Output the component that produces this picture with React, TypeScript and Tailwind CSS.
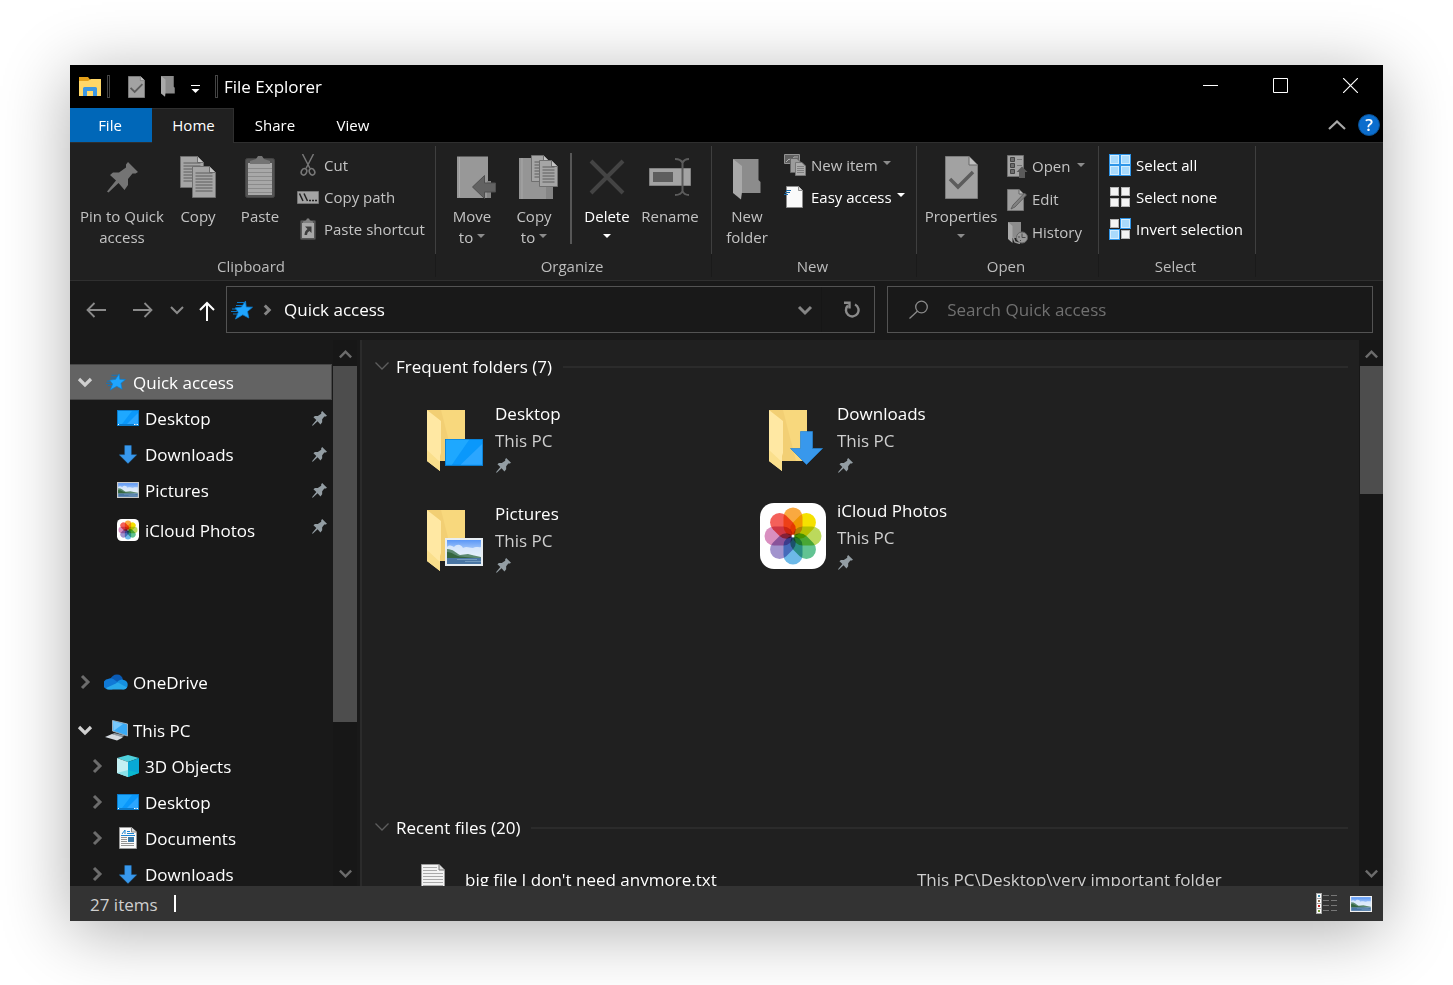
import React, { useId } from "react";

type IconProps = { className?: string };

/* ---------- shared glyphs ---------- */

function Pin({ className = "" }: IconProps) {
  return (
    <svg viewBox="0 0 31 31" className={className} fill="currentColor" aria-hidden="true">
      <path d="M21 0 31 10 28.5 11.5 25.5 11.5 21 17 21 23 17.5 28 11.5 21 1.5 30.5 0 29.5 9 18.5 3 13 6 10.5 12 10.5 19 5.5 19 2.5Z" />
    </svg>
  );
}

function Chevron({ dir, className = "", weight = 3 }: IconProps & { dir: "up" | "down" | "right"; weight?: number }) {
  const d = { up: "M2 10 8 4 14 10", down: "M2 5 8 11 14 5", right: "M5 2 11 8 5 14" }[dir];
  return (
    <svg viewBox="0 0 16 16" className={className} fill="none" stroke="currentColor" strokeWidth={weight} aria-hidden="true">
      <path d={d} />
    </svg>
  );
}

function Caret({ className = "" }: IconProps) {
  return (
    <svg viewBox="0 0 8 4" className={`h-1 w-2 ${className}`} fill="currentColor" aria-hidden="true">
      <path d="M0 0H8L4 4Z" />
    </svg>
  );
}

function Star({ className = "" }: IconProps) {
  return (
    <svg viewBox="0 0 22 20" className={className} aria-hidden="true">
      <path d="M6 2.500h7M5 5.500h7M0 11.500h6M1 9h4M2 14h5" stroke="#0b76c4" strokeWidth="1" />
      <path d="M14.500 1 15.200 7 21.500 7.200 16.500 11.500 17.800 18 11.800 14.800 4.500 19 7.300 12.200 4 8 10.500 7Z" fill="#1fa5ff" stroke="#0c7fd0" strokeWidth=".8" />
    </svg>
  );
}

function DesktopIcon({ className = "", plain }: IconProps & { plain?: boolean }) {
  return (
    <svg viewBox="0 0 22 16" preserveAspectRatio="none" className={className} aria-hidden="true">
      <path d="M0 0H22V16H0Z" fill="#0a7bcc" />
      <path d={plain ? "M.5 .5H21.500V15.300H.5Z" : "M1 1H21V14H1Z"} fill="#0a98fb" />
      <path d={plain ? "M.5 .5H14L4 15.300H.5Z" : "M1 1H15L5 14H1Z"} fill="#1ea8ff" />
      <path d={plain ? "M21.500 3V15.300H9Z" : "M21 3V14H10Z"} fill="#2ba6ff" />
      {!plain && <path d="M1 14.500h1M17 14.500h1.500M19.500 14.500h1.500" stroke="#fff" strokeWidth="1" />}
    </svg>
  );
}

function DownArrow({ className = "" }: IconProps) {
  return (
    <svg viewBox="0 0 33 34" className={className} aria-hidden="true">
      <path d="M10.500 .5H22.500V17.500H32.500L16.500 33.500.5 17.500H10.500Z" fill="#3898ec" stroke="#2484d6" strokeWidth=".7" />
    </svg>
  );
}

function Landscape({ className = "", frame = "#e8eef2" }: IconProps & { frame?: string }) {
  const id = useId();
  return (
    <svg viewBox="0 0 38 28" preserveAspectRatio="none" className={className} aria-hidden="true">
      <defs>
        <linearGradient id={id} x1="0" y1="0" x2="0" y2="1">
          <stop offset="0" stopColor="#5a97f7" />
          <stop offset=".55" stopColor="#c5dcfa" />
          <stop offset=".7" stopColor="#eaf3fb" />
        </linearGradient>
      </defs>
      <path d="M0 0H38V28H0Z" fill={frame} />
      <path d="M2 2H36V26H2Z" fill={`url(#${id})`} />
      <path d="M2 9C5 6 7 8 9 9 12 5 17 7 18 10 22 8 24 10 28 10 31 8 34 10 36 9V18H2Z" fill="#e6f0fb" opacity=".8" />
      <path d="M2 11C8 11 11 15 15 17L23 16 29 17.500 36 19V20H2Z" fill="#5d8a72" />
      <path d="M2 14C7 14 9 17 15 18.500L30 20H2Z" fill="#35663f" />
      <path d="M2 20H36V26H2Z" fill="#4a76a4" />
      <path d="M12 21.500H32M20 23.500H36" stroke="#7fa5c5" strokeWidth=".8" />
    </svg>
  );
}

const petals = ["#f9a940", "#f5e100", "#bcd95c", "#62c392", "#6db9e8", "#a193cd", "#d98fc0", "#f4605a"];

function PhotosIcon({ className = "" }: IconProps) {
  return (
    <svg viewBox="-33 -33 66 66" className={className} aria-hidden="true">
      <rect x="-33" y="-33" width="66" height="66" rx="14" fill="#fff" />
      <g className="isolate">
        {petals.map((color, i) => (
          <rect
            key={color}
            x="-9.500"
            y="-28.500"
            width="19"
            height="28.500"
            rx="9.500"
            fill={color}
            transform={`rotate(${i * 45})`}
            className="mix-blend-multiply"
          />
        ))}
      </g>
      <circle r="1.500" fill="#fff" />
    </svg>
  );
}

function Folder({ className = "" }: IconProps) {
  return (
    <svg viewBox="0 0 38 61" className={className} aria-hidden="true">
      <path d="M0 0H38V51H10Z" fill="#f2cf74" />
      <path d="M38 0V51H27L14 0Z" fill="#fbdd83" opacity=".6" />
      <path d="M0 0 14 11V43L13 46V61L0 51Z" fill="#ffe8a3" />
      <path d="M0 40 13 52V61L0 51Z" fill="#fadf8c" />
    </svg>
  );
}

/* ---------- ribbon icons ---------- */

function GrayPage({ x, y, w, h }: { x: number; y: number; w: number; h: number }) {
  const rows = Array.from({ length: Math.floor((h - 8) / 3) }, (_, i) => y + 6.5 + i * 3);
  return (
    <g>
      <path d={`M${x} ${y}H${x + w - 6}L${x + w} ${y + 6}V${y + h}H${x}Z`} fill="#a5a5a5" stroke="#6f6f6f" />
      <path d={`M${x + w - 6} ${y}V${y + 6}H${x + w}`} fill="#c4c4c4" stroke="#6f6f6f" />
      {rows.map((r) => (
        <path key={r} d={`M${x + 3} ${r}H${x + w - 3}`} stroke="#5c5c5c" />
      ))}
    </g>
  );
}

function CopyIcon() {
  return (
    <svg viewBox="0 0 38 44" className="h-11 w-[38px]" aria-hidden="true">
      <GrayPage x={1.5} y={1.5} w={23} h={31} />
      <GrayPage x={13.5} y={11.5} w={23} h={31} />
    </svg>
  );
}

function PasteIcon() {
  return (
    <svg viewBox="0 0 30 44" className="h-11 w-[30px]" aria-hidden="true">
      <rect x=".5" y="3.500" width="29" height="39" rx="2" fill="#535353" stroke="#444" />
      <path d="M3 8H27V40H3Z" fill="#a8a8a8" />
      <path d="M3 13.500H27M3 17.500H27M3 21.500H27M3 25.500H27M3 29.500H27M3 33.500H27M3 37.500H27" stroke="#8b8b8b" />
      <path d="M5 9V6L11 4 13 1H17L19 4 25 6V9Z" fill="#747474" />
    </svg>
  );
}

function CutIcon() {
  return (
    <svg viewBox="0 0 16 22" className="h-[22px] w-4" fill="none" stroke="#777" aria-hidden="true">
      <path d="M2.500 0 10 14.500M13.500 0 6 14.500" strokeWidth="1.500" />
      <ellipse cx="4" cy="17.800" rx="2.600" ry="3.300" transform="rotate(25 4 17.800)" strokeWidth="1.600" />
      <ellipse cx="12" cy="17.800" rx="2.600" ry="3.300" transform="rotate(-25 12 17.800)" strokeWidth="1.600" />
    </svg>
  );
}

function CopyPathIcon() {
  return (
    <svg viewBox="0 0 22 13" className="h-[13px] w-[22px]" aria-hidden="true">
      <path d="M.5 .5H21.500V12.500H.5Z" fill="#a3a3a3" stroke="#777" />
      <path d="M2.500 2.500 6 10M7 2.500 10.500 10" stroke="#222" strokeWidth="1.500" />
      <path d="M12 9.500h2M15 9.500h2M18 9.500h2" stroke="#222" strokeWidth="1.300" />
    </svg>
  );
}

function PasteShortcutIcon() {
  return (
    <svg viewBox="0 0 16 22" className="h-[22px] w-4" aria-hidden="true">
      <rect x=".5" y="2.500" width="15" height="19" rx="1" fill="#575757" stroke="#444" />
      <path d="M2 5H14V20H2Z" fill="#a8a8a8" />
      <path d="M3 5V3.500L6 2.500 7 .5H9L10 2.500 13 3.500V5Z" fill="#808080" />
      <path d="M5 8.500H11.500V15L9.500 13Q7 14 7 17H4.500Q4.500 13 7.500 11Z" fill="#3d3d3d" />
    </svg>
  );
}

function MoveToIcon() {
  return (
    <svg viewBox="0 0 40 44" className="ml-[7px] h-11 w-10" aria-hidden="true">
      <path d="M1 1.500H32V43H1Z" fill="#989898" />
      <path d="M3.500 2V42" stroke="#aaa" />
      <path d="M31 26H35V43H31Z" fill="#858585" />
      <path d="M16.500 32 28.500 20.500V28H39.500V37H28.500V43.500Z" fill="#626262" stroke="#4f4f4f" />
    </svg>
  );
}

function CopyToIcon() {
  return (
    <svg viewBox="0 0 40 46" className="ml-[9px] h-[46px] w-10" aria-hidden="true">
      <path d="M0 4H28V45H0Z" fill="#959595" />
      <path d="M3 4V45" stroke="#a8a8a8" />
      <path d="M27 30H34V45H27Z" fill="#858585" />
      <GrayPage x={12.5} y={1.5} w={18} h={26} />
      <GrayPage x={20.5} y={6.5} w={18} h={26} />
    </svg>
  );
}

function DeleteIcon() {
  return (
    <svg viewBox="0 0 36 36" className="h-9 w-9" stroke="#444" strokeWidth="4" aria-hidden="true">
      <path d="M2 2 34 34M34 2 2 34" />
    </svg>
  );
}

function RenameIcon() {
  return (
    <svg viewBox="0 0 42 38" className="h-[38px] w-[42px]" fill="none" aria-hidden="true">
      <path d="M.5 10.500H41.500V27.500H.5Z" fill="#a3a3a3" stroke="#818181" />
      <path d="M4 14H24V24H4Z" fill="#5e5e5e" />
      <path d="M33.500 4V34M26 1Q32 1 33.500 5 35 1 40 1M26 37Q32 37 33.500 33 35 37 40 37" stroke="#5c5c5c" strokeWidth="2" />
    </svg>
  );
}

function GrayFolder({ className = "" }: IconProps) {
  return (
    <svg viewBox="0 0 28 41" className={className} preserveAspectRatio="none" aria-hidden="true">
      <path d="M0 0H25.500V21L27.500 23V34H8Z" fill="#8c8c8c" />
      <path d="M0 0 9 7V33L8 40.500 0 34Z" fill="#a9a9a9" />
    </svg>
  );
}

function CheckPage({ className = "" }: IconProps) {
  return (
    <svg viewBox="0 0 33 43" className={className} preserveAspectRatio="none" aria-hidden="true">
      <path d="M.5 .5H24L32.500 9V42.500H.5Z" fill="#a2a2a2" stroke="#7c7c7c" />
      <path d="M24 .5V9H32.500" fill="#c0c0c0" stroke="#6b6b6b" />
      <path d="M5 23 13 31 28 16" fill="none" stroke="#5c5c5c" strokeWidth="3.500" />
    </svg>
  );
}

function NewItemIcon() {
  return (
    <svg viewBox="0 0 22 22" className="h-[22px] w-[22px]" aria-hidden="true">
      <path d="M.5 .5H15.500V9.500H.5Z" fill="#5f5f5f" stroke="#929292" />
      <path d="M2 8 5 5 8 7 10 3 14 3" stroke="#b0b0b0" fill="none" />
      <path d="M6.500 4.500H13L16.500 8V18.500H6.500Z" fill="#9c9c9c" stroke="#666" />
      <path d="M11.500 8.500H18L21.500 12V21.500H11.500Z" fill="#acacac" stroke="#777" />
      <path d="M13 12.500H20M13 14.500H20M13 16.500H20M13 18.500H20" stroke="#808080" />
    </svg>
  );
}

function EasyAccessIcon() {
  return (
    <svg viewBox="0 0 22 22" className="h-[22px] w-[22px]" aria-hidden="true">
      <path d="M2.500 .5H14.500L18.500 4.500V21.500H2.500Z" fill="#fafafa" stroke="#8d8d8d" />
      <path d="M14.500 .5V4.500H18.500" fill="#ddd" stroke="#8d8d8d" />
      <path d="M2 4.500H7M1 6.500H6M0 8.500H4" stroke="#1c6ba8" />
    </svg>
  );
}

function OpenIcon() {
  return (
    <svg viewBox="0 0 22 24" className="h-6 w-[22px]" aria-hidden="true">
      <path d="M.5 .5H16.500V21.500H.5Z" fill="#a4a4a4" stroke="#707070" />
      <path d="M3.500 2.500h4v4h-4zM3.500 8.500h4v4h-4zM3.500 14.500h4v4h-4z" fill="#6c6c6c" stroke="#444" />
      <path d="M10 4.500h5M10 10.500h5" stroke="#777" />
      <path d="M15 11.500 20.500 17H18V23H12V17H9.500Z" fill="#5a5a5a" />
    </svg>
  );
}

function EditIcon() {
  return (
    <svg viewBox="0 0 22 22" className="h-[22px] w-[22px]" aria-hidden="true">
      <path d="M.5 .5H12L16.500 5V21.500H.5Z" fill="#9f9f9f" stroke="#757575" />
      <path d="M12 .5V5H16.500" fill="#bbb" stroke="#666" />
      <path d="M4 20 6 16 17.500 4 19.500 6 8 18Z" fill="#808080" stroke="#555" strokeWidth=".8" />
    </svg>
  );
}

function HistoryIcon() {
  return (
    <svg viewBox="0 0 22 22" className="h-[22px] w-[22px]" aria-hidden="true">
      <path d="M1 0H14V16H5Z" fill="#8c8c8c" />
      <path d="M1 0 5.500 4V21L1 17Z" fill="#aaa" />
      <circle cx="15" cy="15.500" r="5.500" fill="#9a9a9a" stroke="#666" />
      <path d="M15 11.500V15.500H18.500M11 15h2M13 19l1-1" stroke="#4a4a4a" fill="none" />
      <path d="M6 15 8 20 13 21.500" stroke="#999" strokeWidth="1.500" fill="none" />
    </svg>
  );
}

function SelectIcon({ on }: { on: boolean[] }) {
  const at = [
    [0, 0],
    [11, 0],
    [0, 11],
    [11, 11],
  ];
  return (
    <svg viewBox="0 0 22 22" className="h-[22px] w-[22px]" aria-hidden="true">
      {at.map(([x, y], i) =>
        on[i] ? (
          <g key={i}>
            <rect x={x} y={y} width="11" height="11" fill="#2f95e8" />
            <rect x={x + 1.5} y={y + 1.5} width="8" height="8" fill="#a9dafc" stroke="#d5eefe" />
          </g>
        ) : (
          <rect key={i} x={x + 1.5} y={y + 1.5} width="8" height="8" fill="#f4f4f4" stroke="#b5b5b5" />
        )
      )}
    </svg>
  );
}

/* ---------- window chrome ---------- */

function TitleBar() {
  return (
    <header className="flex h-[43px] shrink-0 items-center bg-black pl-[9px]">
      <svg viewBox="0 0 22 20" className="h-5 w-[22px]" aria-hidden="true">
        <path d="M0 0H9L11 2.500H22V19H0Z" fill="#e5a11a" />
        <path d="M0 4H9L12 2H22V19H0Z" fill="#ffd768" />
        <path d="M4 19V11.500Q4 10 5.500 10H16.500Q18 10 18 11.500V19H14V14H8V19Z" fill="#3b96e2" />
      </svg>
      <span className="ml-1.5 h-[23px] w-[3px] border border-[#444]" />
      <button type="button" aria-label="Properties" className="ml-[18px]">
        <CheckPage className="h-[22px] w-[17px]" />
      </button>
      <button type="button" aria-label="New folder" className="ml-4">
        <GrayFolder className="h-[21px] w-[14px]" />
      </button>
      <button type="button" aria-label="Customize Quick Access Toolbar" className="ml-4 pt-1">
        <svg viewBox="0 0 9 8" className="h-2 w-[9px]" fill="#fff" aria-hidden="true">
          <path d="M0 0H9V1H0ZM.5 4H8.500L4.500 8Z" />
        </svg>
      </button>
      <span className="ml-[15px] h-[23px] w-[3px] border border-[#444]" />
      <h1 className="ml-[6px] text-[17px] leading-6 text-white">File Explorer</h1>
      <div className="ml-auto flex h-full gap-[5px] pb-0.5 text-white">
        <button type="button" aria-label="Minimize" className="flex w-[65px] items-center justify-center">
          <svg viewBox="0 0 15 15" className="h-[15px] w-[15px]" fill="none" stroke="currentColor"><path d="M0 7.500H15" /></svg>
        </button>
        <button type="button" aria-label="Maximize" className="flex w-[65px] items-center justify-center">
          <svg viewBox="0 0 15 15" className="h-[15px] w-[15px]" fill="none" stroke="currentColor"><path d="M.5 .5H14.500V14.500H.5Z" /></svg>
        </button>
        <button type="button" aria-label="Close" className="flex w-[65px] items-center justify-center">
          <svg viewBox="0 0 15 15" className="h-[15px] w-[15px]" fill="none" stroke="currentColor" strokeWidth="1.200"><path d="M0 0 15 15M15 0 0 15" /></svg>
        </button>
      </div>
    </header>
  );
}

function TabStrip() {
  return (
    <div className="flex h-[34px] shrink-0 items-stretch bg-black text-[15px] text-white">
      <button type="button" className="w-[82px] bg-[#0067b8] pr-0.5">File</button>
      <button type="button" className="relative z-10 -mb-px w-[82px] border-t border-r border-[#2f2f2f] bg-[#202020] pb-0.5 pl-0.5">Home</button>
      <button type="button" className="w-[82px]">Share</button>
      <button type="button" className="w-[74px]">View</button>
      <div className="ml-auto flex items-center gap-3 pr-[3px]">
        <button type="button" aria-label="Collapse the ribbon" className="text-[#a8a8a8]">
          <svg viewBox="0 0 18 10" className="h-2.5 w-[18px]" fill="none" stroke="currentColor" strokeWidth="2.200"><path d="M1 9 9 1.500 17 9" /></svg>
        </button>
        <button type="button" aria-label="Help" className="flex h-[22px] w-[22px] items-center justify-center rounded-full border border-[#0a4f92] bg-[#0b6dcd] text-[17px] leading-5 font-semibold">?</button>
      </div>
    </div>
  );
}

function Group({ title, className, children }: { title: string; className: string; children: React.ReactNode }) {
  return (
    <section aria-label={title} className={`flex shrink-0 flex-col pt-[3px] ${className}`}>
      <div className="flex h-[108px] border-r border-[#3f3f3f]">{children}</div>
      <h2 className="h-[23px] border-r border-[#1a1a1a] pr-[3px] text-center text-[15px] leading-6 text-[#bcbcbc]">{title}</h2>
    </section>
  );
}

function BigButton({ icon, label, second, caret, active, className }: { icon: React.ReactNode; label: string; second?: string; caret?: boolean; active?: boolean; className: string }) {
  return (
    <button type="button" className={`flex shrink-0 flex-col items-center pt-[7px] text-[15px] leading-[21px] whitespace-nowrap ${active ? "text-white" : "text-[#c3c3c3]"} ${className}`}>
      <span className="mb-[5px] flex h-12 items-center justify-center">{icon}</span>
      <span>{label}</span>
      {(second || caret) && (
        <span className={`flex gap-1 ${second ? "h-[21px] items-center" : "h-[17px] items-center"}`}>
          {second}
          {caret && <Caret className={`${second ? "-mt-1" : ""} ${active ? "text-white" : "text-[#8c8c8c]"}`} />}
        </span>
      )}
    </button>
  );
}

function SmallButton({ icon, label, caret, active, tall }: { icon: React.ReactNode; label: string; caret?: boolean; active?: boolean; tall?: boolean }) {
  return (
    <button type="button" className={`flex items-center text-[15px] whitespace-nowrap ${tall ? "h-[33px] gap-[3px]" : "h-8 gap-[5px]"} ${active ? "text-white" : "text-[#c3c3c3]"}`}>
      <span className="flex w-[22px] items-center justify-center">{icon}</span>
      <span>{label}</span>
      {caret && <Caret className={`-mt-1 ${tall ? "ml-1" : ""} ${active ? "text-white" : "text-[#8c8c8c]"}`} />}
    </button>
  );
}

function Ribbon() {
  return (
    <div className="flex h-[139px] shrink-0 overflow-hidden border-y border-[#2f2f2f] bg-[#202020]">
      <Group title="Clipboard" className="w-[366px]">
        <BigButton className="ml-2 w-[88px]" icon={<Pin className="h-[31px] w-[31px] text-[#747474]" />} label="Pin to Quick" second="access" />
        <BigButton className="w-16" icon={<CopyIcon />} label="Copy" />
        <BigButton className="w-[60px]" icon={<PasteIcon />} label="Paste" />
        <div className="ml-[7px] flex flex-col pt-[3px]">
          <SmallButton icon={<CutIcon />} label="Cut" />
          <SmallButton icon={<CopyPathIcon />} label="Copy path" />
          <SmallButton icon={<PasteShortcutIcon />} label="Paste shortcut" />
        </div>
      </Group>
      <Group title="Organize" className="w-[276px]">
        <BigButton className="ml-[5px] w-[62px]" icon={<MoveToIcon />} label="Move" second="to" caret />
        <BigButton className="w-[62px]" icon={<CopyToIcon />} label="Copy" second="to" caret />
        <span className="mt-[7px] mr-[5px] ml-[5px] h-[91px] w-0.5 bg-[#575757]" />
        <BigButton className="w-[60px]" icon={<DeleteIcon />} label="Delete" caret active />
        <BigButton className="w-[66px]" icon={<RenameIcon />} label="Rename" />
      </Group>
      <Group title="New" className="w-[205px]">
        <BigButton className="ml-1 w-[62px]" icon={<GrayFolder className="mt-1 h-[41px] w-7" />} label="New" second="folder" />
        <div className="ml-[6px] flex flex-col pt-[3px]">
          <SmallButton icon={<NewItemIcon />} label="New item" caret />
          <SmallButton icon={<EasyAccessIcon />} label="Easy access" caret active />
        </div>
      </Group>
      <Group title="Open" className="w-[182px]">
        <BigButton className="ml-[5px] w-[78px]" icon={<CheckPage className="h-[43px] w-[33px]" />} label="Properties" caret />
        <div className="ml-[7px] flex flex-col pt-1">
          <SmallButton icon={<OpenIcon />} label="Open" caret tall />
          <SmallButton icon={<EditIcon />} label="Edit" tall />
          <SmallButton icon={<HistoryIcon />} label="History" tall />
        </div>
      </Group>
      <Group title="Select" className="w-[157px]">
        <div className="ml-2.5 flex flex-col pt-[3px]">
          <SmallButton icon={<SelectIcon on={[true, true, true, true]} />} label="Select all" active />
          <SmallButton icon={<SelectIcon on={[false, false, false, false]} />} label="Select none" active />
          <SmallButton icon={<SelectIcon on={[false, true, true, false]} />} label="Invert selection" active />
        </div>
      </Group>
    </div>
  );
}

function AddressRow() {
  return (
    <div className="flex h-[59px] shrink-0 items-center bg-[#191919] pb-0.5 text-[17px] text-white">
      <div className="flex w-[156px] shrink-0 items-center pl-4 text-[#8b8b8b]">
        <button type="button" aria-label="Back">
          <svg viewBox="0 0 20 16" className="h-4 w-5" fill="none" stroke="currentColor" strokeWidth="1.800"><path d="M20 8H1.500M8.500 1 1.500 8 8.500 15" /></svg>
        </button>
        <button type="button" aria-label="Forward" className="ml-[27px]">
          <svg viewBox="0 0 20 16" className="h-4 w-5" fill="none" stroke="currentColor" strokeWidth="1.800"><path d="M0 8H18.500M11.500 1 18.500 8 11.500 15" /></svg>
        </button>
        <button type="button" aria-label="Recent locations" className="ml-4">
          <Chevron dir="down" weight={2} className="h-4 w-4" />
        </button>
        <button type="button" aria-label="Up" className="ml-[14px] text-white">
          <svg viewBox="0 0 16 20" className="mt-0.5 h-5 w-4" fill="none" stroke="currentColor" strokeWidth="2"><path d="M8 20V2M1 9 8 2 15 9" /></svg>
        </button>
      </div>
      <div className="flex h-[47px] min-w-0 flex-1 items-center border border-[#535353] pl-1">
        <Star className="h-5 w-[22px]" />
        <Chevron dir="right" weight={4} className="ml-2 h-3 w-3 text-[#858585]" />
        <span className="ml-[11px]">Quick access</span>
        <button type="button" aria-label="Previous locations" className="mr-2 ml-auto text-[#858585]">
          <Chevron dir="down" weight={3} className="h-4 w-4" />
        </button>
        <button type="button" aria-label="Refresh" className="flex h-full w-[53px] items-center justify-center border-l border-[#161616] pl-[7px] text-[#8b8b8b]">
          <svg viewBox="0 0 16 18" className="h-[18px] w-4" fill="none" stroke="currentColor" strokeWidth="2.400">
            <path d="M11 3.500A6.300 6.300 0 1 1 4 4.500" />
            <path d="M0 1.800H5.500V7.500" />
          </svg>
        </button>
      </div>
      <label className="mr-2.5 ml-3 flex h-[47px] w-[37%] items-center border border-[#535353] pl-[21px]">
        <svg viewBox="0 0 20 20" className="h-5 w-5 shrink-0" fill="none" stroke="#8b8b8b" strokeWidth="1.300" aria-hidden="true">
          <circle cx="12.500" cy="7" r="5.800" />
          <path d="M8.300 11.300 .5 18.500" />
        </svg>
        <input type="text" aria-label="Search Quick access" placeholder="Search Quick access" className="ml-[18px] h-full min-w-0 flex-1 bg-transparent text-[17px] outline-none placeholder:text-[#707070]" />
      </label>
    </div>
  );
}

/* ---------- panes ---------- */

function ScrollTrack({ thumb }: { thumb: string }) {
  return (
    <div className="flex w-6 shrink-0 flex-col bg-[#171717] text-[#6c6c6c]">
      <button type="button" aria-label="Scroll up" className="flex h-[26px] items-center justify-center pt-1">
        <Chevron dir="up" weight={2.6} className="h-[15px] w-[15px]" />
      </button>
      <div className="flex-1"><div className={`bg-[#4d4d4d] ${thumb}`} /></div>
      <button type="button" aria-label="Scroll down" className="flex h-[26px] items-center justify-center">
        <Chevron dir="down" weight={2.6} className="h-[15px] w-[15px]" />
      </button>
    </div>
  );
}

function TreeRow({ icon, label, open, child, pinned, selected, closed, low }: { icon: React.ReactNode; label: string; open?: boolean; closed?: boolean; child?: boolean; pinned?: boolean; selected?: boolean; low?: boolean }) {
  return (
    <li>
      <button type="button" className={`flex h-9 w-full items-center text-left ${child ? "pl-5" : "pl-2"} ${selected ? "border-y border-r border-[#474747] bg-[#636363]" : ""}`}>
        <span className="flex w-[14px] justify-center">
          {open && <Chevron dir="down" weight={3.2} className="h-4 w-4 shrink-0 text-[#d0d0d0]" />}
          {closed && <Chevron dir="right" weight={3} className="h-4 w-4 shrink-0 text-[#6c6c6c]" />}
        </span>
        <span className={`ml-3 flex flex-1 items-center ${low ? "pt-2" : ""}`}>
          <span className="flex w-6 items-center justify-center">{icon}</span>
          <span className="ml-[5px] pt-0.5 leading-6">{label}</span>
        </span>
        {pinned && <Pin className="mr-[5px] h-[15px] w-[15px] text-[#939da3]" />}
      </button>
    </li>
  );
}

const smallDesktop = <DesktopIcon className="h-4 w-[22px]" />;
const smallDownload = <DownArrow className="h-[19px] w-[18px]" />;

function Sidebar() {
  return (
    <aside className="flex w-[292px] shrink-0 border-r-2 border-[#2b2b2b] bg-[#191919] text-[17px] text-white">
      <nav aria-label="Folders" className="mr-px w-[262px] overflow-hidden pt-6">
        <ul>
          <TreeRow icon={<Star className="h-[18px] w-5" />} label="Quick access" open selected />
          <TreeRow icon={smallDesktop} label="Desktop" child pinned />
          <TreeRow icon={smallDownload} label="Downloads" child pinned />
          <TreeRow icon={<Landscape frame="#c9c9c9" className="h-4 w-[22px]" />} label="Pictures" child pinned />
          <TreeRow icon={<PhotosIcon className="h-[22px] w-[22px]" />} label="iCloud Photos" child pinned low />
        </ul>
        <ul className="mt-[120px]">
          <TreeRow
            icon={
              <svg viewBox="0 0 24 16" className="h-4 w-6" aria-hidden="true">
                <path d="M6 6Q8 .5 13 .5 18 .5 19 6L13 10Z" fill="#0a5bb5" />
                <path d="M5 15.500A5 5 0 0 1 4 5Q8 3 12 7L16 10 8 15.500Z" fill="#1079d6" />
                <path d="M12 9Q16 4 20 6A4.900 4.900 0 0 1 20 15.500L12 14Z" fill="#1590df" />
                <path d="M2 14 14 8.500 23 13.500Q22 15.500 19 15.500H5Q3 15.500 2 14Z" fill="#28a8ea" />
              </svg>
            }
            label="OneDrive"
            closed
          />
        </ul>
        <ul className="mt-3">
          <TreeRow
            icon={
              <svg viewBox="0 0 24 21" className="h-[21px] w-6" aria-hidden="true">
                <path d="M8.500 .5 23.500 4V16L8.500 11Z" fill="#3aaaf5" stroke="#a9b6bf" strokeWidth=".9" />
                <path d="M9 1 19 4 9.500 11Z" fill="#79c8fb" />
                <path d="M10.500 13 21 15.500 17 17.500 8 14Z" fill="#8f9aa3" />
                <path d="M1 17 8 14 19 17.500 13 20.500Z" fill="#d5dbe0" />
              </svg>
            }
            label="This PC"
            open
          />
          <TreeRow
            icon={
              <svg viewBox="0 0 22 22" className="h-[22px] w-[22px]" aria-hidden="true">
                <path d="M0 3 11 0 22 3 11 7Z" fill="#4fd0dc" />
                <path d="M0 3 11 7V22L0 18Z" fill="#c4f0f3" />
                <path d="M22 3 11 7V22L22 18Z" fill="#08a8d6" />
                <path d="M11 15 22 18 11 22Z" fill="#0bb9cf" />
                <path d="M0 18 11 15V22Z" fill="#8be2e9" />
              </svg>
            }
            label="3D Objects"
            child
            closed
          />
          <TreeRow icon={smallDesktop} label="Desktop" child closed />
          <TreeRow
            icon={
              <svg viewBox="0 0 18 22" className="h-[22px] w-[18px]" aria-hidden="true">
                <path d="M.5 .5H12.500L17.500 5V21.500H.5Z" fill="#fafafa" stroke="#999" />
                <path d="M12.500 .5V5H17.500" fill="#ddd" stroke="#888" />
                <path d="M3 7 6 3V7M8 4.500H11M8 6.500H15M2 8.500H16" stroke="#1d84d2" fill="none" />
                <path d="M9 10H15V15H9Z" fill="#3b79a8" />
                <path d="M2 10.500H8M2 12.500H8M2 14.500H8M2 16.500H15M2 18.500H15" stroke="#888" strokeWidth=".9" />
              </svg>
            }
            label="Documents"
            child
            closed
          />
          <TreeRow icon={smallDownload} label="Downloads" child closed />
        </ul>
      </nav>
      <ScrollTrack thumb="h-[72%]" />
    </aside>
  );
}

function SectionHeader({ title }: { title: string }) {
  return (
    <h2 className="flex h-6 items-center pr-[11px] pl-[13px] text-[17px] leading-6 text-white">
      <svg viewBox="0 0 14 8" className="-mt-0.5 h-2 w-[14px]" fill="none" stroke="#5e5e5e" strokeWidth="1.300" aria-hidden="true"><path d="M.5 .5 7 7 13.500 .5" /></svg>
      <span className="ml-[7px]">{title}</span>
      <span className="ml-[11px] h-0.5 flex-1 bg-[#2b2b2b]" />
    </h2>
  );
}

function Tile({ name, icon, className = "" }: { name: string; icon: React.ReactNode; className?: string }) {
  return (
    <li className={`flex w-[342px] gap-2 text-[17px] leading-[27px] ${className}`}>
      <span className="flex w-[72px] shrink-0">{icon}</span>
      <span className="flex flex-col items-start">
        <span className="text-white">{name}</span>
        <span className="text-[#cfcfcf]">This PC</span>
        <Pin className="mt-1 ml-px h-[15px] w-[15px] text-[#939da3]" />
      </span>
    </li>
  );
}

function FolderTile({ name, badge }: { name: string; badge: React.ReactNode }) {
  return (
    <Tile
      name={name}
      icon={
        <span className="relative mt-[10px] ml-3 h-[61px] w-14">
          <Folder className="h-[61px] w-[38px]" />
          {badge}
        </span>
      }
    />
  );
}

function Content() {
  return (
    <main className="flex min-w-0 flex-1 bg-[#202020]">
      <div className="min-w-0 flex-1 overflow-hidden pt-[15px]">
        <SectionHeader title="Frequent folders (7)" />
        <ul className="mt-[21px] ml-[53px] grid grid-cols-[342px_342px] gap-y-[27px]">
          <FolderTile name="Desktop" badge={<DesktopIcon plain className="absolute right-0 bottom-[5px] h-[27px] w-[38px]" />} />
          <FolderTile name="Downloads" badge={<DownArrow className="absolute right-0.5 bottom-[6px] h-[34px] w-[33px]" />} />
          <FolderTile name="Pictures" badge={<Landscape className="absolute right-0 bottom-[5px] h-7 w-[38px]" />} />
          <Tile name="iCloud Photos" className="-mt-[3px]" icon={<PhotosIcon className="mt-[6px] ml-[3px] h-[66px] w-[66px]" />} />
        </ul>
        <div className="mt-[243px]">
          <SectionHeader title="Recent files (20)" />
        </div>
        <ul className="mt-5 pl-[59px]">
          <li className="flex items-start text-[17px] leading-6">
            <svg viewBox="0 0 24 30" className="mt-1 h-[30px] w-6" aria-hidden="true">
              <path d="M.5 .5H18L23.500 6V29.500H.5Z" fill="#f3f3f3" stroke="#9b9b9b" />
              <path d="M18 .5V6H23.500" fill="#ddd" stroke="#777" />
              <path d="M2 3.500H16M2 6.500H16M2 9.500H22M2 12.500H22M2 15.500H22M2 18.500H22M2 21.500H22" stroke="#aaa" />
            </svg>
            <span className="ml-5 w-[452px] pt-2 text-white">big file I don't need anymore.txt</span>
            <span className="pt-2 whitespace-nowrap text-[#cfcfcf]">This PC\Desktop\very important folder</span>
          </li>
        </ul>
      </div>
      <ScrollTrack thumb="ml-px h-[26%]" />
    </main>
  );
}

function StatusBar() {
  const dots = ["#3e8fb0", "#8a6a4a", "#c8281e", "#7a9a3a"];
  return (
    <footer className="flex h-[35px] shrink-0 items-center bg-[#333] pr-[11px] pl-5 text-[17px] text-[#cfcfcf]">
      <span className="pt-0.5 leading-6">27 items</span>
      <span className="ml-4 h-[17px] w-0.5 bg-white" />
      <button type="button" aria-label="Details view" className="ml-auto">
        <svg viewBox="0 0 21 21" className="h-[21px] w-[21px]" aria-hidden="true">
          {dots.map((c, i) => (
            <g key={c}>
              <rect x=".5" y={i * 5 + 0.5} width="5" height="5" fill="#fff" stroke="#aaa" />
              <rect x="2" y={i * 5 + 2} width="2" height="2" fill={c} />
              <path d={`M7 ${i * 5 + 2.5}h6M15 ${i * 5 + 2.5}h6`} stroke="#777" />
            </g>
          ))}
        </svg>
      </button>
      <button type="button" aria-label="Large icons view" className="ml-[13px]">
        <Landscape frame="#f2f2f2" className="h-4 w-[22px]" />
      </button>
    </footer>
  );
}

export default function App() {
  return (
    <div className="h-screen bg-white px-[70px] pt-[65px] pb-16 font-['Open_Sans','Noto_Sans',sans-serif]">
      <div className="flex h-full flex-col overflow-hidden bg-[#191919] shadow-[0_10px_64px_rgba(0,0,0,0.32)]">
        <TitleBar />
        <TabStrip />
        <Ribbon />
        <AddressRow />
        <div className="flex min-h-0 flex-1">
          <Sidebar />
          <Content />
        </div>
        <StatusBar />
      </div>
    </div>
  );
}
